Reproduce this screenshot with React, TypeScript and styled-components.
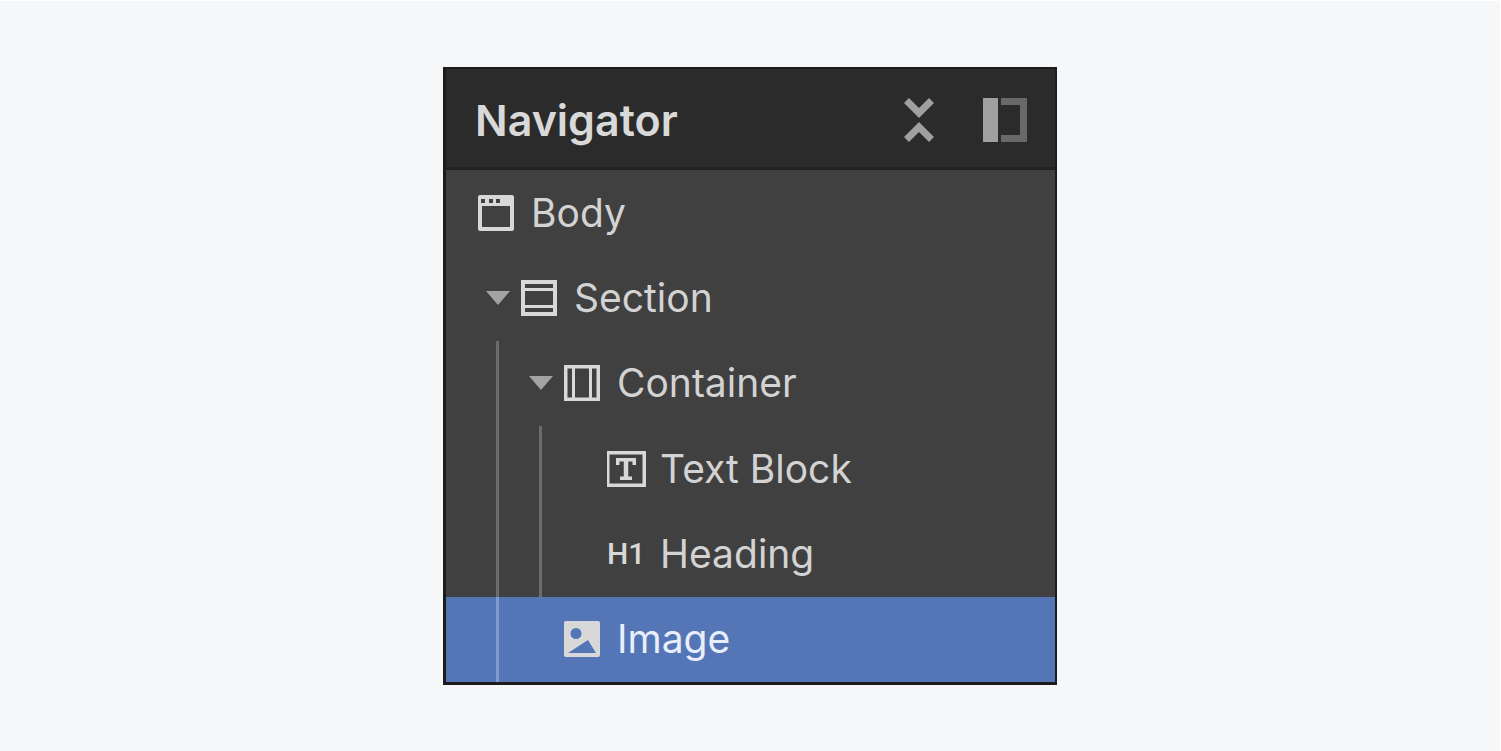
import React from "react";
import styled, { createGlobalStyle } from "styled-components";

const GlobalStyle = createGlobalStyle`
  * { box-sizing: border-box; }
  body {
    margin: 0;
    background: #f5f7f9;
    font-family: Inter, "Liberation Sans", sans-serif;
  }
`;

const Page = styled.main`
  min-height: 100vh;
  display: flex;
  justify-content: center;
  align-items: flex-start;
  padding: 66px 24px;
  border: solid #ffffff;
  border-width: 1px 1px 0 0;
`;

const Panel = styled.section`
  width: 100%;
  max-width: 614px;
  border: solid #1c1c1d;
  border-width: 2px 2px 3px 3px;
  background: #404040;
`;

const Header = styled.header`
  display: flex;
  align-items: center;
  height: 101px;
  padding: 3px 28px 0 29px;
  background: #2b2b2b;
  border-bottom: 3px solid #222222;
`;

const Title = styled.h2`
  flex: 1;
  margin: 0;
  font-size: 43px;
  line-height: 52px;
  font-weight: 600;
  color: #d9d9d9;
`;

const Actions = styled.div`
  display: flex;
  align-items: center;
  gap: 48px;
`;

const IconButton = styled.button`
  display: flex;
  padding: 0;
  border: 0;
  background: none;
  cursor: pointer;
`;

const Tree = styled.ul`
  display: grid;
  grid-auto-rows: 1fr;
  min-height: 512px;
  margin: 0;
  padding: 0;
  list-style: none;
`;

const Row = styled.li<{ $selected?: boolean }>`
  display: flex;
  align-items: center;
  padding-left: 30px;
  background: ${(p) => (p.$selected ? "#5476b7" : "transparent")};
  color: ${(p) => (p.$selected ? "#e9effa" : "#d3d3d3")};
  --guide: ${(p) => (p.$selected ? "#7f9bd0" : "#6b6b6b")};
`;

const Indent = styled.span<{ $guide?: boolean }>`
  display: flex;
  justify-content: center;
  align-self: stretch;
  width: 43px;
  &::before {
    content: "";
    width: 3px;
    background: ${(p) => (p.$guide ? "var(--guide)" : "transparent")};
  }
`;

const Toggle = styled.button`
  display: flex;
  justify-content: center;
  width: 43px;
  padding: 0;
  border: 0;
  background: none;
  cursor: pointer;
`;

const IconSlot = styled.span`
  display: flex;
  width: 40px;
  margin: 0 13px 0 2px;
  color: #d8d8d8;
`;

const HeadingMark = styled.span`
  font-family: Roboto, "Liberation Sans", sans-serif;
  font-size: 30px;
  line-height: 40px;
  font-weight: 500;
`;

const Label = styled.span`
  font-size: 39px;
  line-height: 48px;
`;

const svgProps = { width: 40, height: 36, viewBox: "0 0 40 36", "aria-hidden": true } as const;

const BodyIcon = () => (
  <svg {...svgProps}>
    <path
      fill="currentColor"
      fillRule="evenodd"
      d="M2 0H34Q36 0 36 2V34Q36 36 34 36H2Q0 36 0 34V2Q0 0 2 0ZM4 11V32H32V11ZM3 4V8H7V4ZM11 4V8H15V4ZM18 4V8H22V4Z"
    />
  </svg>
);

const SectionIcon = () => (
  <svg {...svgProps}>
    <path fill="none" stroke="currentColor" strokeWidth="4" d="M2 2H34V34H2Z" />
    <path fill="none" stroke="currentColor" strokeWidth="3" d="M2 9.500H34M2 26.500H34" />
  </svg>
);

const ContainerIcon = () => (
  <svg {...svgProps}>
    <path fill="none" stroke="currentColor" strokeWidth="3.500" d="M1.750 1.750H34.250V34.250H1.750Z" />
    <path fill="none" stroke="currentColor" strokeWidth="3" d="M9.500 2V34M26.500 2V34" />
  </svg>
);

const TextIcon = () => (
  <svg {...svgProps}>
    <path fill="none" stroke="currentColor" strokeWidth="3.500" d="M0.750 1.750H37.250V34.250H0.750Z" />
    <path fill="none" stroke="currentColor" strokeWidth="3.500" d="M10.750 14V8.750H27.250V14M13 27.250H25" />
    <path fill="none" stroke="currentColor" strokeWidth="4.500" d="M19 8V28" />
  </svg>
);

const ImageIcon = () => (
  <svg {...svgProps}>
    <path
      fill="currentColor"
      fillRule="evenodd"
      d="M2 0H34Q36 0 36 2V34Q36 36 34 36H2Q0 36 0 34V2Q0 0 2 0ZM12 7A5.500 5.500 0 1 0 12 18A5.500 5.500 0 1 0 12 7ZM4 32H32L24 19Z"
    />
  </svg>
);

const Arrow = () => (
  <svg width="24" height="14" viewBox="0 0 24 14" aria-hidden="true">
    <path fill="#a3a3a3" d="M0 0H24L12 14Z" />
  </svg>
);

type Item = {
  label: string;
  icon: React.ReactNode;
  cells: ("guide" | "blank" | "toggle")[];
  selected?: boolean;
};

const items: Item[] = [
  { label: "Body", icon: <BodyIcon />, cells: [] },
  { label: "Section", icon: <SectionIcon />, cells: ["toggle"] },
  { label: "Container", icon: <ContainerIcon />, cells: ["guide", "toggle"] },
  { label: "Text Block", icon: <TextIcon />, cells: ["guide", "guide", "blank"] },
  { label: "Heading", icon: <HeadingMark>H1</HeadingMark>, cells: ["guide", "guide", "blank"] },
  { label: "Image", icon: <ImageIcon />, cells: ["guide", "blank"], selected: true },
];

export default function App() {
  return (
    <>
      <GlobalStyle />
      <Page>
        <Panel>
          <Header>
            <Title>Navigator</Title>
            <Actions>
              <IconButton type="button" aria-label="Collapse all">
                <svg width="32" height="44" viewBox="0 0 32 44" aria-hidden="true">
                  <path
                    fill="none"
                    stroke="#a0a0a0"
                    strokeWidth="7"
                    d="M3.500 2.500L16 15L28.500 2.500M3.500 41.500L16 29L28.500 41.500"
                  />
                </svg>
              </IconButton>
              <IconButton type="button" aria-label="Dock panel">
                <svg width="44" height="44" viewBox="0 0 44 44" aria-hidden="true">
                  <path fill="#a0a0a0" d="M0 0H15V44H0Z" />
                  <path fill="#696969" d="M18 0H44V44H18V37H37V7H18Z" />
                </svg>
              </IconButton>
            </Actions>
          </Header>
          <Tree>
            {items.map((item) => (
              <Row key={item.label} $selected={item.selected}>
                {item.cells.map((cell, i) =>
                  cell === "toggle" ? (
                    <Toggle key={i} type="button" aria-label={"Collapse " + item.label}>
                      <Arrow />
                    </Toggle>
                  ) : (
                    <Indent key={i} $guide={cell === "guide"} />
                  )
                )}
                <IconSlot>{item.icon}</IconSlot>
                <Label>{item.label}</Label>
              </Row>
            ))}
          </Tree>
        </Panel>
      </Page>
    </>
  );
}
